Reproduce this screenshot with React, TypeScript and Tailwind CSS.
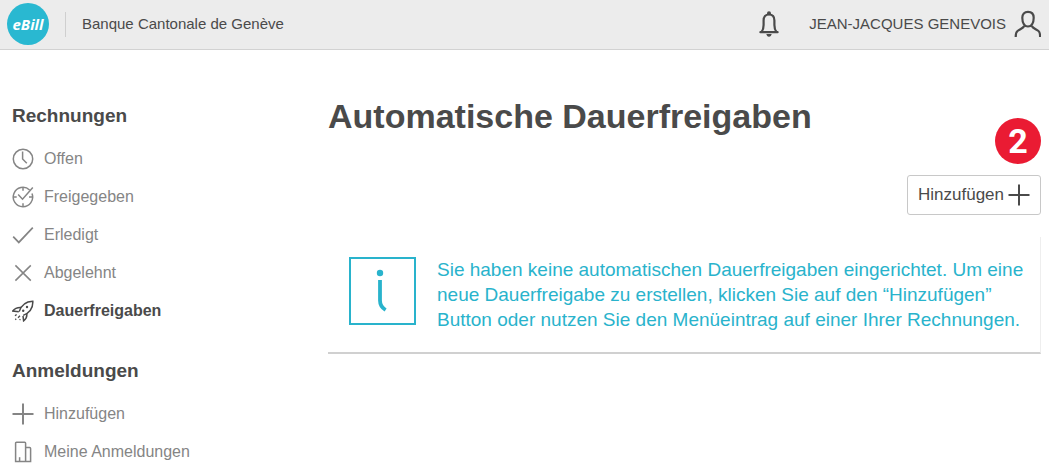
import React from 'react';

interface IconProps {
  children: React.ReactNode;
  className?: string;
}

const Icon: React.FC<IconProps> = ({ children, className = 'size-[22px]' }) => (
  <svg
    viewBox="0 0 22 22"
    fill="none"
    stroke="currentColor"
    strokeWidth="1.5"
    className={`shrink-0 ${className}`}
    aria-hidden="true"
  >
    {children}
  </svg>
);

const ClockIcon = () => (
  <Icon>
    <circle cx="11" cy="11" r="9.7" />
    <path d="M10.6 3.5V11l4.2 4.2" />
  </Icon>
);

const ClockCheckIcon = () => (
  <Icon>
    <path d="M17.6 4A9.7 9.7 0 1 0 20 7.6" />
    <path d="M6.2 8.6l4.3 4.6L20.8 1.4" />
    <path d="M11 1.5v3.2M11 17.2v3.5M1.5 11h3.2M17 11h3.6" />
  </Icon>
);

const CheckIcon = () => (
  <Icon>
    <path d="M1.2 12.6l5.6 5.8L20.8 3.6" strokeWidth="1.7" />
  </Icon>
);

const CrossIcon = () => (
  <Icon>
    <path d="M3.4 3.4l15.4 15.2M18.8 3.4L3.4 18.6" />
  </Icon>
);

const RocketIcon = () => (
  <Icon>
    <path d="M7.2 11.6C9 5.6 13.4 1.5 20.8 1.2c.4 7-3.4 11.6-9.6 14.2" />
    <path d="M9.2 7.4C5.4 7.2 2.6 8.4.8 11l6 .8M14.8 13.6c.4 3.200-.6 5.400-3.200 7.200l-.6-5" />
    <circle cx="15" cy="7" r="1.2" fill="currentColor" stroke="none" />
    <circle cx="11.2" cy="10.8" r="1.2" fill="currentColor" stroke="none" />
    <path d="M4.600 14.400l-1.600 1.400M8 15.800l-2 2M4.200 18.800l-.9.9M8.400 19.200l-.8.8" strokeWidth="1.300" />
  </Icon>
);

const PlusIcon = () => (
  <Icon>
    <path d="M11 .5v21M.5 11h21" strokeWidth="2" />
  </Icon>
);

const BuildingIcon = () => (
  <Icon>
    <path d="M3.6 20.5V2.2c0-.6.3-.9.9-.9h8.2c.6 0 .9.3.9.9v18.3h-10zM13.6 6.6h4c.7 0 1 .3 1 1v12.9h-5" />
    <path d="M7.6 16.2v4.3" />
  </Icon>
);

const BellIcon = () => (
  <svg viewBox="0 0 20 26" fill="none" stroke="currentColor" strokeWidth="2.2" className="h-[26px] w-5" aria-hidden="true">
    <path d="M1.400 21.2h17.200M2.600 20.900c1.500-2 2-4 2-7V9.400C4.600 5.800 6.600 3.500 10 3.500s5.400 2.300 5.400 5.900v4.500c0 3 .5 5 2 7" strokeLinecap="round" />
    <circle cx="10" cy="2.300" r="2" fill="currentColor" stroke="none" />
    <path d="M7.300 23.100h5.400c-.4 1.700-1.200 2.600-2.700 2.600s-2.300-.9-2.700-2.600z" fill="currentColor" stroke="none" />
  </svg>
);

const UserIcon = () => (
  <svg viewBox="0 0 28 28" fill="none" stroke="currentColor" strokeWidth="2.2" className="size-7" aria-hidden="true">
    <path d="M15 1.900c3.700 0 5.700 2.200 5.700 5.900 0 5.200-2.200 8.700-5.700 8.700s-5.700-3.500-5.700-8.700c0-3.700 2-5.900 5.700-5.900z" />
    <path d="M11.400 15.900c-1.400 2.400-4.800 3.500-6.900 5.100-1.300 1-1.800 2.500-1.800 6M18.600 15.900c1.400 2.400 4.800 3.500 6.900 5.100 1.300 1 1.600 2.500 1.600 6" />
  </svg>
);

const InfoIcon = () => (
  <svg viewBox="0 0 67 68" fill="none" stroke="currentColor" className="h-[68px] w-[67px] shrink-0" aria-hidden="true">
    <rect x="1" y="1" width="65" height="66" strokeWidth="2" />
    <circle cx="31" cy="16" r="3.200" fill="currentColor" stroke="none" />
    <path d="M31 23v20.500c0 4.500 1.500 7 5.600 9.500" strokeWidth="3.800" />
  </svg>
);

interface NavItem {
  label: string;
  icon: React.ReactNode;
  active?: boolean;
}

interface NavSectionProps {
  title: string;
  items: NavItem[];
}

const invoiceItems: NavItem[] = [
  { label: 'Offen', icon: <ClockIcon /> },
  { label: 'Freigegeben', icon: <ClockCheckIcon /> },
  { label: 'Erledigt', icon: <CheckIcon /> },
  { label: 'Abgelehnt', icon: <CrossIcon /> },
  { label: 'Dauerfreigaben', icon: <RocketIcon />, active: true },
];

const registrationItems: NavItem[] = [
  { label: 'Hinzufügen', icon: <PlusIcon /> },
  { label: 'Meine Anmeldungen', icon: <BuildingIcon /> },
];

const NavSection: React.FC<NavSectionProps> = ({ title, items }) => (
  <section>
    <h2 className="text-[19px] leading-6 font-bold">{title}</h2>
    <ul className="mt-3">
      {items.map((item) => (
        <li key={item.label}>
          <a
            href="#"
            aria-current={item.active ? 'page' : undefined}
            className={`flex h-[38px] items-center gap-2.5 text-base ${
              item.active ? 'font-bold text-[#4a4a4a]' : 'text-[#858585]'
            }`}
          >
            {item.icon}
            {item.label}
          </a>
        </li>
      ))}
    </ul>
  </section>
);

const Header = () => (
  <header className="mr-0.5 flex h-[50px] items-center border-b border-[#d2d2d2] bg-[#ececec] pr-2 pb-px pl-[7px] text-[15px]">
    <a
      href="#"
      className="flex size-[42px] items-center justify-center rounded-full bg-[#29b8d1] font-['Open_Sans',sans-serif] text-[15px] font-bold text-white italic"
    >
      eBill
    </a>
    <div className="mx-4 h-[25px] w-px bg-[#cfcfcf]" />
    <span>Banque Cantonale de Genève</span>
    <div className="ml-auto flex items-center">
      <button type="button" aria-label="Benachrichtigungen" className="mr-[30px]">
        <BellIcon />
      </button>
      <button type="button" className="flex items-center gap-[7px]">
        JEAN-JACQUES GENEVOIS
        <UserIcon />
      </button>
    </div>
  </header>
);

const App: React.FC = () => {
  return (
    <div className="bg-white font-['Liberation_Sans',Arial,sans-serif] text-[#4a4a4a]">
      <Header />
      <div className="flex pr-2.5 pl-3">
        <nav className="flex w-[316px] shrink-0 flex-col gap-[29px] pt-[54px]">
          <NavSection title="Rechnungen" items={invoiceItems} />
          <NavSection title="Anmeldungen" items={registrationItems} />
        </nav>
        <main className="flex min-w-0 flex-1 flex-col pt-[46px]">
          <div className="flex h-[68px] items-start justify-between">
            <h1 className="text-[34px] leading-10 font-bold">Automatische Dauerfreigaben</h1>
            <span className="flex size-[46px] items-center justify-center self-end rounded-full bg-[#ea1b33] font-[Roboto,sans-serif] text-[34px] font-bold text-white">
              2
            </span>
          </div>
          <button
            type="button"
            className="mt-[11px] flex h-10 items-center gap-1 self-end rounded-[3px] border border-[#c8c8c8] px-2.5 text-[17px]"
          >
            Hinzufügen
            <PlusIcon />
          </button>
          <div className="mt-[22px] flex items-start gap-[21px] border-r border-b-2 border-r-[#eeeeee] border-b-[#d0d0d0] py-5 pr-4 pl-[21px] text-[#29b3cc]">
            <InfoIcon />
            <p className="text-[19px] leading-[25px]">
              Sie haben keine automatischen Dauerfreigaben eingerichtet. Um eine neue Dauerfreigabe zu erstellen,
              klicken Sie auf den “Hinzufügen” Button oder nutzen Sie den Menüeintrag auf einer Ihrer Rechnungen.
            </p>
          </div>
        </main>
      </div>
    </div>
  );
};

export default App;
